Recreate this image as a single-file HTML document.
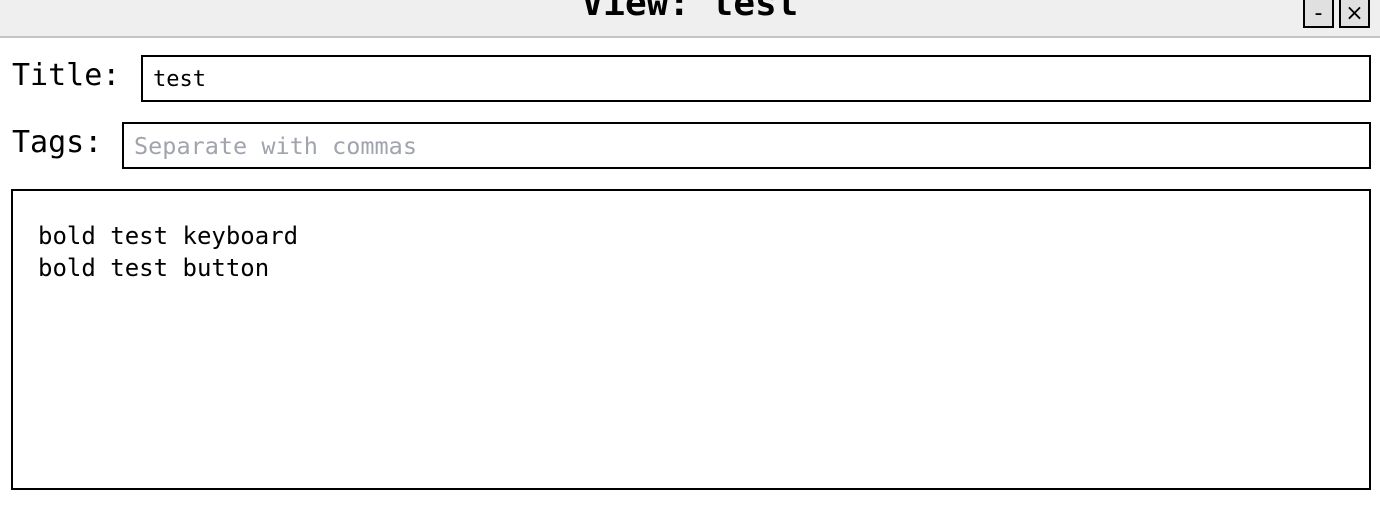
<!DOCTYPE html>
<html><head><style>
body{margin:0;width:1380px;height:532px;background:#fff;position:relative;overflow:hidden;font-family:"DejaVu Sans Mono","Liberation Mono",monospace;}
.bar{position:absolute;left:0;top:0;width:1380px;height:36px;background:#efefef;border-bottom:2px solid #c4c4c4;}
.ttl{position:absolute;left:0;width:1380px;top:-17px;text-align:center;font:bold 36px "DejaVu Sans Mono",monospace;color:#000;}
.btn{position:absolute;top:-3px;width:27px;height:27px;border:2px solid #000;background:#e0e0e0;font:22px "DejaVu Sans",sans-serif;text-align:center;line-height:30px;}
.lbl{position:absolute;left:12px;font:30px "DejaVu Sans Mono",monospace;color:#000;}
.in{position:absolute;border:2px solid #000;box-sizing:border-box;padding-left:10px;line-height:45px;}
.ta{position:absolute;left:11px;top:189px;width:1360px;height:301px;border:2px solid #000;box-sizing:border-box;font:24px "DejaVu Sans Mono",monospace;padding:29px 0 0 25px;line-height:32px;}
</style></head><body>
<div class="bar"><div class="ttl">View: test</div>
<div class="btn" style="left:1303px">-</div><div class="btn" style="left:1339px">×</div></div>
<div class="lbl" style="top:58px">Title:</div>
<div class="in" style="left:141px;top:55px;width:1230px;height:47px;font-size:22px">test</div>
<div class="lbl" style="top:125px">Tags:</div>
<div class="in" style="left:122px;top:122px;width:1249px;height:47px;color:#a0a4ad;font-size:23.5px">Separate with commas</div>
<div class="ta">bold test keyboard<br>bold test button</div>
</body></html>
